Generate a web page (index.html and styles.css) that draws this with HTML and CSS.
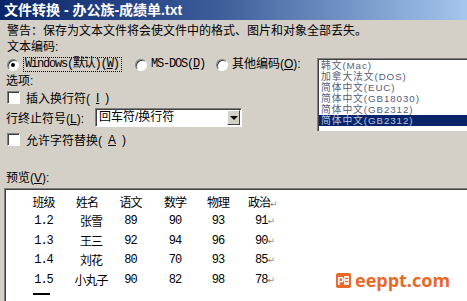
FILE: index.html
```html
<!DOCTYPE html>
<html lang="zh-CN">
<head>
  <meta charset="UTF-8">
  <title>文件转换</title>
  <link rel="stylesheet" href="styles.css">
</head>
<body>

<div class="dialog">
  <div class="titlebar">文件转换 - 办公族-成绩单.txt</div>

  <div class="content">
    <p class="line warn">警告：保存为文本文件将会使文件中的格式、图片和对象全部丢失。</p>
    <p class="line label-enc">文本编码:</p>

    <div class="encoding">
      <div class="options">
        <div class="radios">
          <label class="radio-opt opt-win"><span class="radio checked"></span><span class="focus mono">Windows(默认)(<u>W</u>)</span></label>
          <label class="radio-opt opt-dos"><span class="radio"></span><span class="mono">MS-DOS(<u>D</u>)</span></label>
          <label class="radio-opt"><span class="radio"></span><span>其他编码(<u>O</u>):</span></label>
        </div>

        <p class="line label-opt">选项:</p>
        <label class="check-row"><span class="checkbox"></span>插入换行符(<u>I</u>)</label>

        <div class="eol">
          <span class="eol-label">行终止符号(<u>L</u>):</span>
          <div class="select">
            <span class="select-text">回车符/换行符</span>
            <span class="select-btn"><span class="arrow"></span></span>
          </div>
        </div>

        <label class="check-row check-sub"><span class="checkbox"></span>允许字符替换(<u>A</u>)</label>
      </div>

      <ul class="listbox">
        <li>韩文(Mac)</li>
        <li>加拿大法文(DOS)</li>
        <li>简体中文(EUC)</li>
        <li>简体中文(GB18030)</li>
        <li>简体中文(GB2312)</li>
        <li class="selected">简体中文(GB2312)</li>
      </ul>
    </div>

    <p class="line label-prev">预览(<u>V</u>):</p>

    <div class="preview">
      <div class="sheet">
        <span>班级</span><span>姓名</span><span>语文</span><span>数学</span><span>物理</span><span class="last head">政治<i>↵</i></span>
        <span>1.2</span><span class="name">张雪</span><span>89</span><span>90</span><span>93</span><span class="last">91<i>↵</i></span>
        <span>1.3</span><span class="name">王三</span><span>92</span><span>94</span><span>96</span><span class="last">90<i>↵</i></span>
        <span>1.4</span><span class="name">刘花</span><span>80</span><span>70</span><span>93</span><span class="last">85<i>↵</i></span>
        <span>1.5</span><span class="name">小丸子</span><span>90</span><span>82</span><span>98</span><span class="last">78<i>↵</i></span>
      </div>
      <div class="cursor"></div>

      <div class="watermark">
        <svg width="15" height="15" viewBox="0 0 15 15">
          <rect x="0" y="0" width="15" height="15" rx="2" fill="#e8692a"/>
          <rect x="8" y="3" width="5" height="9" fill="#fff" opacity="0.85"/>
          <rect x="9" y="5" width="3" height="1" fill="#e8692a"/>
          <rect x="9" y="8" width="3" height="1" fill="#e8692a"/>
          <text x="1.5" y="11.5" font-family="Liberation Sans, sans-serif" font-size="10" font-weight="bold" fill="#fff">P</text>
        </svg>
        <span>eeppt.com</span>
      </div>
    </div>
  </div>
</div>

</body>
</html>
```

FILE: styles.css
```css
* {
  box-sizing: border-box;
}
html, body {
  margin: 0;
  width: 467px;
  height: 301px;
  overflow: hidden;
}
body {
  background-color: #d4d0c8;
  font-family: "Liberation Sans", "Noto Sans CJK SC", sans-serif;
  font-size: 12px;
  color: #000;
}

p {
  margin: 0;
}

.dialog {
  height: 301px;
}

.titlebar {
  height: 20px;
  padding-left: 4px;
  line-height: 20px;
  font-size: 14px;
  font-weight: bold;
  color: #fff;
  background: linear-gradient(to right, #0a246a 0%, #3a5a98 45%, #a6c6ee 100%);
}

.content {
  padding-left: 3px;
}

.line {
  height: 15px;
  line-height: 15px;
}

.warn {
  margin-top: 4px;
  padding-left: 4px;
}

.label-enc {
  margin-top: 1px;
  padding-left: 4px;
}

.encoding {
  display: flex;
  margin-top: 2px;
}

.options {
  flex: none;
  width: 314px;
}

.mono {
  font-family: "Liberation Mono", "Noto Sans CJK SC", monospace;
  font-size: 12px;
  letter-spacing: -1.2px;
}

.radios {
  display: flex;
  align-items: center;
  height: 15px;
  padding-left: 4px;
}

.radio-opt {
  display: flex;
  align-items: center;
  gap: 4px;
  line-height: 15px;
  min-width: 0;
  flex: none;
}

.opt-win {
  width: 128px;
}

.opt-dos {
  width: 81px;
}

.radio {
  position: relative;
  width: 12px;
  height: 12px;
  border-radius: 50%;
  background-color: #fff;
  border: 1px solid;
  border-color: #808080 #fff #fff #808080;
  box-shadow: inset 1px 1px #404040;
  flex: none;
}

.radio.checked::after {
  content: "";
  position: absolute;
  left: 3px;
  top: 3px;
  width: 4px;
  height: 4px;
  border-radius: 50%;
  background-color: #000;
}

.focus {
  border: 1px dotted #000;
  line-height: 13px;
  padding: 0 2px 0 1px;
}

.label-opt {
  margin-top: 2px;
  padding-left: 3px;
}

.check-row {
  display: flex;
  align-items: center;
  gap: 6px;
  height: 15px;
  margin-top: 1px;
  padding-left: 4px;
}

.check-sub {
  margin-top: 5px;
}

.checkbox {
  width: 13px;
  height: 13px;
  background-color: #fff;
  border: 1px solid;
  border-color: #808080 #fff #fff #808080;
  box-shadow: inset 1px 1px #404040;
  flex: none;
}

.eol {
  display: flex;
  align-items: center;
  height: 19px;
  margin-top: 3px;
  padding-left: 3px;
}

.eol-label {
  width: 89px;
}

.select {
  display: flex;
  align-items: center;
  width: 147px;
  height: 19px;
  background-color: #fff;
  border: 1px solid;
  border-color: #808080 #fff #fff #808080;
  box-shadow: inset 1px 1px #404040;
  padding: 1px 1px 1px 3px;
}

.select-text {
  flex: 1;
  font-size: 12px;
  line-height: 15px;
}

.select-btn {
  display: flex;
  align-items: center;
  justify-content: center;
  width: 13px;
  height: 15px;
  background-color: #d4d0c8;
  border: 1px solid;
  border-color: #fff #404040 #404040 #fff;
}

.arrow {
  width: 0;
  height: 0;
  border-left: 4px solid transparent;
  border-right: 4px solid transparent;
  border-top: 4px solid #000;
}

.listbox {
  flex: none;
  width: 160px;
  height: 73px;
  margin: 1px 0 0 0;
  padding: 1px 0 0 1px;
  list-style: none;
  background-color: #fff;
  border-top: 1px solid #808080;
  border-left: 1px solid #808080;
  box-shadow: inset 1px 1px #404040;
  font-size: 9.8px;
  line-height: 11px;
  letter-spacing: 0.9px;
  color: #55607a;
}

.listbox li {
  height: 11px;
  padding-left: 2px;
  white-space: nowrap;
}

.listbox li.selected {
  background-color: #0a246a;
  color: #b8c4dc;
}

.label-prev {
  margin-top: 24px;
  padding-left: 3px;
}

.preview {
  position: relative;
  margin: 2px 0 0 1px;
  height: 113px;
  background-color: #fff;
  border-top: 1px solid #808080;
  border-left: 1px solid #808080;
  box-shadow: inset 1px 1px #404040;
  padding: 3px 0 0 17px;
}

.sheet {
  display: grid;
  grid-template-columns: 43px 44px 43px 46px 40px 60px;
  grid-auto-rows: 19.5px;
  font-family: "Liberation Mono", "Noto Sans CJK SC", monospace;
  font-size: 12px;
  letter-spacing: -1px;
  align-items: center;
}

.sheet span {
  text-align: center;
  white-space: nowrap;
}

.sheet .name {
  padding-left: 8px;
}

.sheet .last {
  text-align: left;
  padding-left: 17px;
}

.sheet .last.head {
  padding-left: 10px;
}

.sheet i {
  font-family: "DejaVu Sans", sans-serif;
  font-style: normal;
  font-size: 9px;
  letter-spacing: 0;
  color: #888;
}

.cursor {
  width: 17px;
  height: 2px;
  margin: 3px 0 0 11px;
  background-color: #000;
}

.watermark {
  position: absolute;
  left: 331px;
  top: 80px;
  display: flex;
  align-items: center;
  gap: 4px;
  font-family: "Open Sans", "Liberation Sans", sans-serif;
  font-size: 18px;
  line-height: 22px;
  font-weight: bold;
  color: #e8692a;
}
```
